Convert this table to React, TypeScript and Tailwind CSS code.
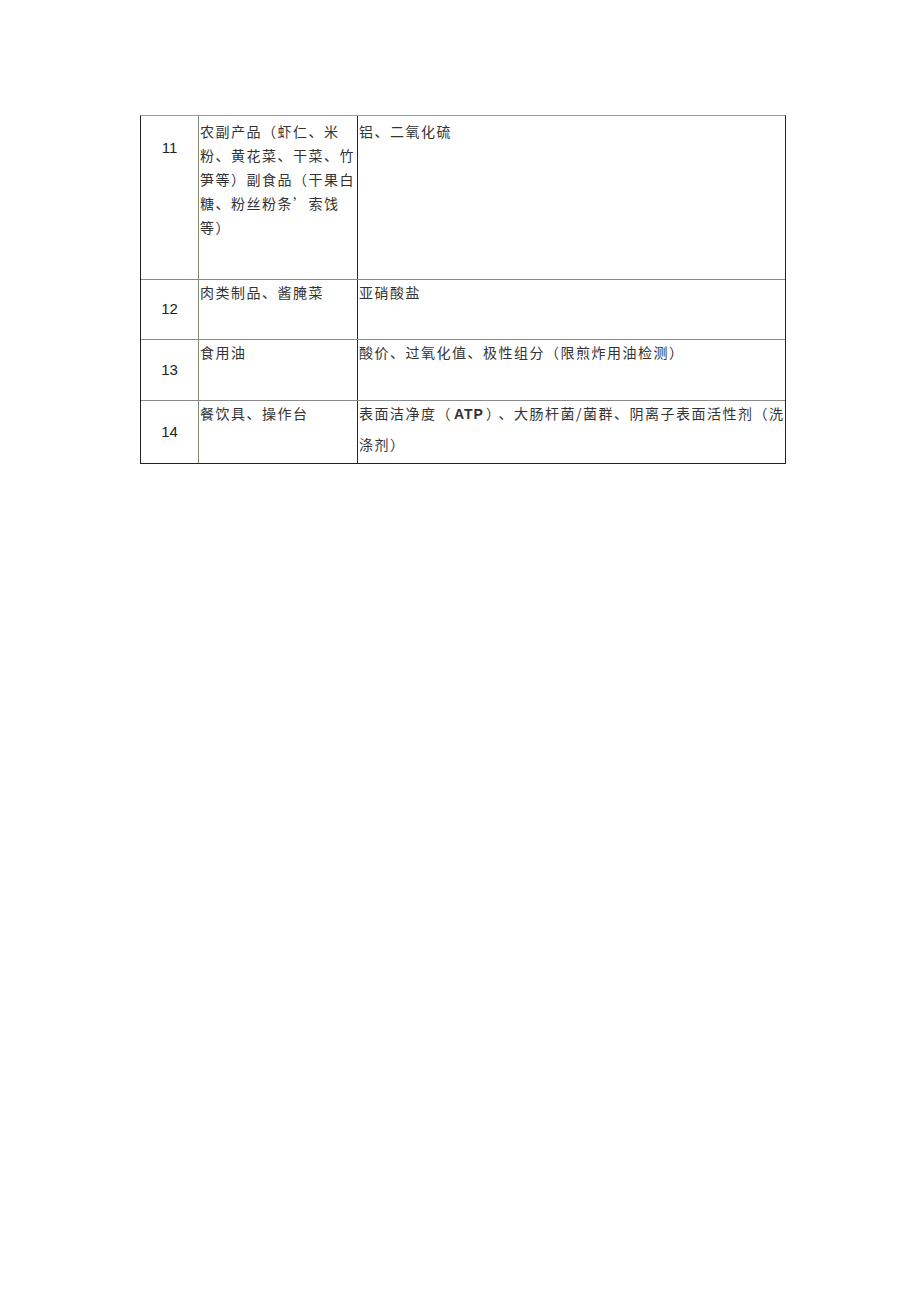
const cjk = '"Noto Sans CJK SC", "Noto Sans CJK JP", sans-serif'

type Row = {
  no: string
  food: string[]
  items: React.ReactNode[]
  h: string
  top?: boolean
  noTop?: string
}

const rows: Row[] = [
  {
    no: '11',
    food: ['农副产品（虾仁、米', '粉、黄花菜、干菜、竹', '笋等）副食品（干果白', '糖、粉丝粉条\u2019索饯', '等）'],
    items: ['铝、二氧化硫'],
    h: 'h-[163px]',
    top: true,
    noTop: 'pt-[21px]',
  },
  { no: '12', food: ['肉类制品、酱腌菜'], items: ['亚硝酸盐'], h: 'h-[60px]' },
  { no: '13', food: ['食用油'], items: ['酸价、过氧化值、极性组分（限煎炸用油检测）'], h: 'h-[61px]' },
  {
    no: '14',
    food: ['餐饮具、操作台'],
    items: [
      <>
        表面洁净度（
        <span
          className="mx-[2px] font-bold tracking-[1px]"
          style={{ fontFamily: '"Liberation Sans", sans-serif' }}
        >
          ATP
        </span>
        ）<span className="ml-[4px]">、</span>大肠杆菌/菌群、阴离子表面活性剂（洗
      </>,
      '涤剂）',
    ],
    h: 'h-[63px]',
  },
]

function TableRow({ row }: { row: Row }) {
  const single = !row.top
  return (
    <div
      className={`grid grid-cols-[58px_159px_1fr] ${row.h} ${row.top ? '' : 'border-t border-[#8a8a8a]'}`}
    >
      <div
        className={`flex justify-center border-r border-[#7f8a72] text-[15px] text-[#222] ${
          single ? 'items-center' : 'items-start ' + row.noTop
        }`}
        style={{ fontFamily: '"Liberation Sans", Arial, sans-serif' }}
      >
        {row.no}
      </div>
      <div
        className={`border-r border-[#2a2a2a] pl-[1px] text-[14px] tracking-[1.5px] text-[#333] leading-[24px] ${
          row.top ? 'pt-[3px]' : ''
        }`}
        style={{ fontFamily: cjk }}
      >
        {row.food.map((l, i) => (
          <div key={i} className="whitespace-nowrap">
            {l}
          </div>
        ))}
      </div>
      <div
        className={`flex flex-col gap-[6px] pl-[1px] text-[14px] tracking-[1.5px] text-[#333] leading-[24px] ${
          row.top ? 'pt-[3px]' : ''
        }`}
        style={{ fontFamily: cjk }}
      >
        {row.items.map((l, i) => (
          <div key={i} className="whitespace-nowrap">
            {l}
          </div>
        ))}
      </div>
    </div>
  )
}

export default function App() {
  return (
    <div className="min-h-[1301px] w-[920px] bg-white pl-[140px] pt-[115px]">
      <div className="w-[646px] border border-[#222] border-t-[#9a9a9a]">
        {rows.map((r) => (
          <TableRow key={r.no} row={r} />
        ))}
      </div>
    </div>
  )
}
